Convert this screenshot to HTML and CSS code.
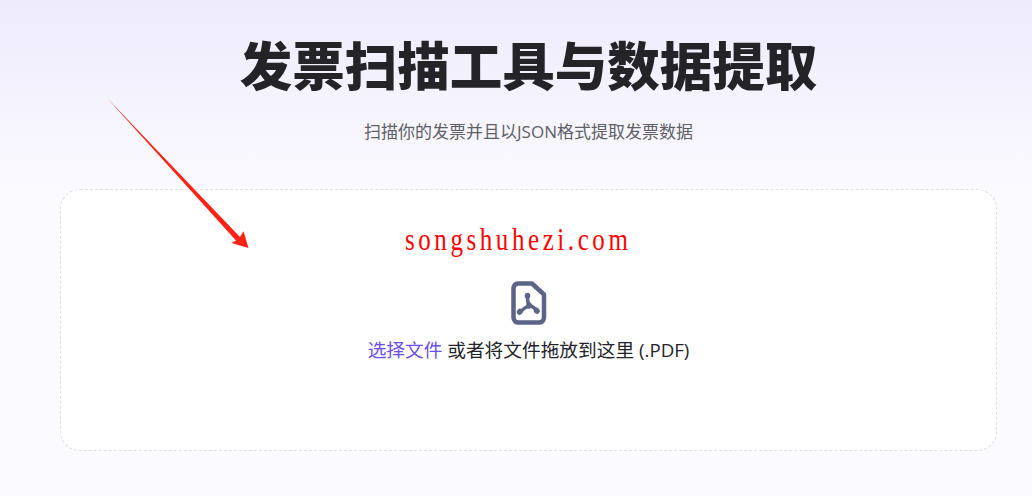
FILE: index.html
```html
<!DOCTYPE html>
<html lang="zh">
<head>
  <meta charset="utf-8">
  <title>发票扫描工具与数据提取</title>
  <link rel="stylesheet" href="styles.css">
</head>
<body>
  <div class="page">
    <h1 class="title">发票扫描工具与数据提取</h1>
    <p class="subtitle">扫描你的发票并且以JSON格式提取发票数据</p>
    <div class="dropzone">
      <div class="watermark">songshuhezi.com</div>
      <svg class="pdf-icon" viewBox="0 0 36 44" width="36" height="44" fill="none" stroke="#5c6488">
        <path d="M7 2.500H21L33 13.500V36.500A5 5 0 0 1 28.500 41.500H7A5 5 0 0 1 2.500 36.500V7A5 5 0 0 1 7 2.500Z" stroke-width="4.500" stroke-linejoin="round"/>
        <path d="M16.500 14Q16 20 18 24.500M8.500 31.500Q13 27 18 24.500M26.500 30.500Q23 25.500 18 24.500" stroke-width="3.500" stroke-linecap="round"/>
        <path d="M16.500 14.500V15M8.500 31L9 30.500M26 30L25.500 29.500M18 24V25" stroke-width="5.500" stroke-linecap="round"/>
      </svg>
      <p class="drop-text"><a class="pick-link" href="#">选择文件</a> 或者将文件拖放到这里 <span class="file-ext">(.PDF)</span></p>
    </div>
  </div>
  <svg class="arrow" viewBox="0 0 150 155" width="150" height="155">
    <path d="M1 1L134 140L137.500 134.200L142.500 151L125.500 146L130 143.500Z" fill="#ff2114"/>
  </svg>
</body>
</html>
```

FILE: styles.css
```css
html, body {
  height: 100%;
}

body {
  margin: 0;
  font-family: "Open Sans", "Noto Sans CJK SC", sans-serif;
  color: #232328;
  background: linear-gradient(180deg, #eeebfc 0, #fbfaff 190px);
  overflow: hidden;
}

.page {
  padding: 30px 35px 0 60px;
}

.title {
  margin: 0;
  font-size: 52.500px;
  line-height: 72px;
  font-weight: 900;
  text-align: center;
  color: #232328;
}

.subtitle {
  margin: 18px 0 0;
  font-size: 17px;
  line-height: 24px;
  text-align: center;
  color: #5f5f66;
}

.dropzone {
  position: relative;
  box-sizing: border-box;
  height: 262px;
  margin-top: 45px;
  padding-top: 91px;
  border: 1px dashed #dfdfea;
  border-radius: 20px;
  background: #fff;
  display: flex;
  flex-direction: column;
  align-items: center;
}

.watermark {
  position: absolute;
  top: 31px;
  left: 344px;
  font-family: "Liberation Serif", serif;
  font-size: 32px;
  line-height: 36px;
  letter-spacing: 4.600px;
  white-space: nowrap;
  color: #ff0000;
  transform: scaleX(.78);
  transform-origin: left center;
}

.pdf-icon {
  display: block;
}

.drop-text {
  margin: 12px 0 0;
  font-size: 18.700px;
  line-height: 26px;
  color: #232328;
}

.pick-link {
  color: #6d4ee6;
  text-decoration: none;
}

.file-ext {
  font-weight: 500;
}

.arrow {
  position: absolute;
  top: 97px;
  left: 106px;
}
```
